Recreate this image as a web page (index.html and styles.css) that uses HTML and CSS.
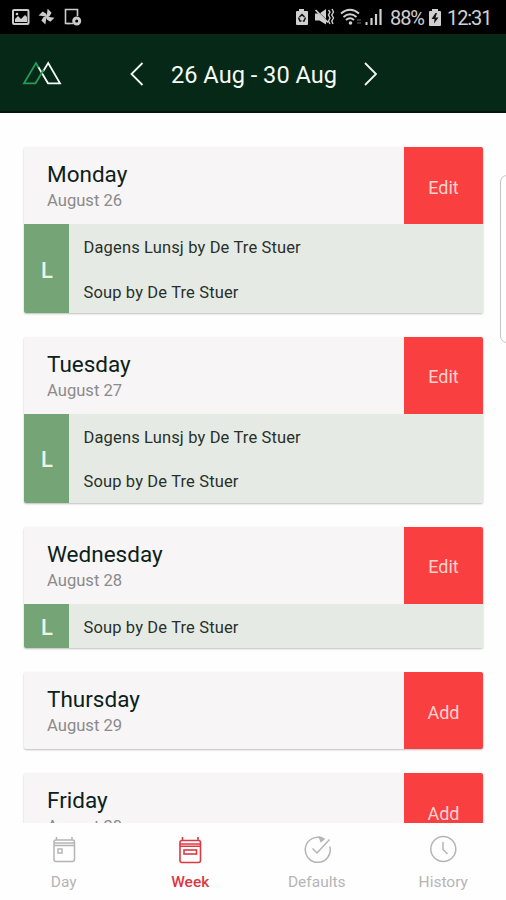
FILE: index.html
```html
<!DOCTYPE html>
<html lang="en">
<head>
<meta charset="utf-8">
<title>Week</title>
<link rel="stylesheet" href="styles.css">
</head>
<body>
<div class="app">
  <div class="status">
    <svg class="status-left" width="72" height="20" viewBox="0 0 72 20">
      <rect x="1" y="2" width="15.5" height="14" rx="1" fill="none" stroke="#ccc" stroke-width="2"/>
      <path d="M3 14V11L6 8L9 11L13 7L15 9V14Z" fill="#ccc"/><circle cx="5" cy="6" r="1.3" fill="#ccc"/>
      <g fill="#ccc" transform="translate(34.500 8.700) rotate(8)"><path d="M0 1V-8L4.500-4.500L3-1Z"/><path d="M-1 0H8L4.500 4.500L1 3Z"/><path d="M0-1V8L-4.500 4.500L-3 1Z"/><path d="M1 0H-8L-4.500-4.500L-1-3Z"/></g>
      <path d="M57.500 15.500H53.500V1.500H65.500V8" fill="none" stroke="#ccc" stroke-width="1.600"/>
      <circle cx="64.700" cy="13" r="3" fill="none" stroke="#ccc" stroke-width="3"/><path d="M55 15.500H61" stroke="#ccc" stroke-width="1.500"/>
    </svg>
    <div class="status-right">
      <svg width="88" height="20" viewBox="0 0 88 20">
        <path fill="#d0d0d0" d="M4 1H9V3H12Q13 3 13 4V16Q13 17 12 17H2Q1 17 1 16V4Q1 3 2 3H4Z"/>
        <path d="M4.500 9L7 6.500L9.500 9M3.500 9.500L5 13H6.500M10.500 9.500L9 13H7.800" fill="none" stroke="#111" stroke-width="1.500"/>
        <path fill="#d0d0d0" d="M20 5.500H24.500L31 1V16.500L24.500 12.500H20Z"/>
        <path d="M20 1L33 14" stroke="#000" stroke-width="1.500"/><path d="M20.500 2L33 14.500" stroke="#d0d0d0" stroke-width="1.700"/>
        <path d="M33.500 2L35 4L33.500 7L35 10L33.500 13L35 16M37 1L38.500 4L36.800 7L38.500 10L36.800 13L38 16" fill="none" stroke="#d0d0d0" stroke-width="1.400"/>
        <path d="M46 5.500Q55-2 64 5.500M48.500 9Q55 3.500 61.500 9M51 12Q55 8.500 59 12" fill="none" stroke="#d0d0d0" stroke-width="2"/><circle cx="55.500" cy="15" r="1.800" fill="#d0d0d0"/><path d="M62 12H66M62 15H66" stroke="#444" stroke-width="1.500"/>
        <path d="M71.500 17V14" stroke="#d0d0d0" stroke-width="2"/><path d="M76.500 17V10M81 17V6M85.500 17V1" stroke="#d0d0d0" stroke-width="2.200"/>
      </svg>
      <span class="pct">88%</span>
      <svg class="batt" width="12" height="18" viewBox="0 0 12 18"><path fill="#d0d0d0" d="M3 0H9V2H11Q12 2 12 3V16Q12 17 11 17H1Q0 17 0 16V3Q0 2 1 2H3Z"/><path fill="#111" d="M6.500 4L2.500 10H5.500L5 14.500L9.500 8.500H6.500L8 4Z"/></svg>
      <span class="clock">12:31</span>
    </div>
  </div>
  <header class="topbar">
    <svg class="logo" width="42" height="28" viewBox="0 0 42 28" fill="none" stroke-width="1.800">
      <path stroke="#f4faf4" d="M16 7.500L26 24.300H38L26.200 4L21 12.500"/>
      <path stroke="#259a5b" d="M16.500 8.500L14 4L2 24.300H13.500L21.500 11"/>
    </svg>
    <div class="range">
      <svg width="16" height="26" viewBox="0 0 16 26"><path d="M13.500 2L2.500 13L13.500 24" fill="none" stroke="#f2f7f2" stroke-width="1.800"/></svg>
      <h1>26 Aug - 30 Aug</h1>
      <svg width="16" height="26" viewBox="0 0 16 26"><path d="M2 2L13 13L2 24" fill="none" stroke="#f2f7f2" stroke-width="1.800"/></svg>
    </div>
  </header>
  <main class="days">
    <section class="card">
      <div class="head"><div class="date"><h2>Monday</h2><p>August 26</p></div><button class="action">Edit</button></div>
      <div class="meal"><div class="tag">L</div><ul><li>Dagens Lunsj by De Tre Stuer</li><li>Soup by De Tre Stuer</li></ul></div>
    </section>
    <section class="card">
      <div class="head"><div class="date"><h2>Tuesday</h2><p>August 27</p></div><button class="action">Edit</button></div>
      <div class="meal"><div class="tag">L</div><ul><li>Dagens Lunsj by De Tre Stuer</li><li>Soup by De Tre Stuer</li></ul></div>
    </section>
    <section class="card">
      <div class="head"><div class="date"><h2>Wednesday</h2><p>August 28</p></div><button class="action">Edit</button></div>
      <div class="meal"><div class="tag">L</div><ul><li>Soup by De Tre Stuer</li></ul></div>
    </section>
    <section class="card">
      <div class="head"><div class="date"><h2>Thursday</h2><p>August 29</p></div><button class="action">Add</button></div>
    </section>
    <section class="card">
      <div class="head"><div class="date"><h2>Friday</h2><p>August 30</p></div><button class="action">Add</button></div>
    </section>
    <div class="edge"></div>
  </main>
  <nav class="tabs">
    <a class="tab"><svg width="28" height="30" viewBox="0 0 28 30"><g fill="none" stroke="currentColor" stroke-width="1.500"><rect x="4" y="5" width="20.500" height="21.500" rx="2"/><path d="M4 8H24.500M4 10.500H24.500M6.500 2V5M22 2V5"/><rect x="8" y="14" width="4" height="4"/></g></svg><span>Day</span></a>
    <a class="tab active"><svg width="28" height="30" viewBox="0 0 28 30"><g fill="none" stroke="currentColor" stroke-width="1.600"><rect x="4" y="5.500" width="20.500" height="22" rx="2"/><path d="M4 9H24.500M4 11.300H24.500M6.500 2V5M22 2V5"/><rect x="8" y="15" width="12.500" height="4"/></g></svg><span>Week</span></a>
    <a class="tab"><svg width="28" height="30" viewBox="0 0 28 30"><g fill="none" stroke="currentColor" stroke-width="1.500"><path d="M20 3.500A12.500 12.500 0 1 0 26.800 11.500"/><path fill="currentColor" d="M16.500 2.300L21 4L18 6.500Z"/><path d="M9.500 13.500L14 18L26.500 4.500"/></g></svg><span>Defaults</span></a>
    <a class="tab"><svg width="28" height="30" viewBox="0 0 28 30"><g fill="none" stroke="currentColor" stroke-width="1.500"><circle cx="14.300" cy="14" r="12.500"/><path d="M14 7V14.500L18.500 19"/></g></svg><span>History</span></a>
  </nav>
</div>
</body>
</html>
```
FILE: styles.css
```css
* { box-sizing: border-box; margin: 0; padding: 0; }
body { width: 506px; height: 900px; overflow: hidden; background: #fefefe; font-family: Roboto, "Liberation Sans", sans-serif; }
.app { display: flex; flex-direction: column; height: 900px; }
.status { height: 34px; flex: none; background: #000; color: #d0d0d0; display: flex; justify-content: space-between; align-items: center; padding: 1px 14px 0 12px; }
.status-right { display: flex; align-items: center; font-size: 20px; line-height: 34px; }
.pct { margin-left: 7px; width: 34px; letter-spacing: -1.1px; white-space: nowrap; }
.batt { margin: 0 6px 0 5px; }
.clock { width: 45px; letter-spacing: -1.1px; white-space: nowrap; }
.topbar { height: 79px; flex: none; background: #062817; border-bottom: 2px solid #04170e; display: flex; align-items: center; padding: 2px 0 0 22px; }
.logo { margin-bottom: 2px; }
.range { display: flex; align-items: center; margin-left: 65px; }
.range h1 { width: 166px; margin: 2px 26px 0 26px; font-size: 23.6px; font-weight: 400; color: #f5faf5; white-space: nowrap; }
.days { flex: 1; min-height: 0; overflow: hidden; position: relative; padding: 34px 23px 0 24px; display: flex; flex-direction: column; gap: 24px; }
.card { flex: none; border-radius: 2px; overflow: hidden; background: #f7f5f6; box-shadow: 0 1px 2px rgba(0,0,0,.25); }
.head { height: 77.25px; display: flex; justify-content: space-between; }
.date { padding: 14px 0 0 23px; }
.date h2 { font-size: 22.5px; line-height: 27px; font-weight: 400; color: #0c2119; }
.date p { font-size: 16.6px; line-height: 20px; margin-top: 3px; color: #8b8b8b; }
.action { width: 79px; height: 77px; border: 0; background: #fa3f41; color: #ffd3d0; font: 400 18px Roboto, sans-serif; padding-top: 3px; }
.meal { display: flex; background: #e5ebe4; }
.tag { width: 45px; background: #75a477; color: #eaf6e6; display: flex; align-items: center; justify-content: center; font-size: 22px; font-weight: 500; padding: 3px 0 0 1px; }
.meal ul { list-style: none; padding-left: 14.5px; }
.meal li { height: 44.25px; line-height: 47px; font-size: 16.5px; letter-spacing: .14px; color: #29302b; white-space: nowrap; }
.edge { position: absolute; right: -12px; top: 62px; width: 18px; height: 168px; border: 1px solid #c4c4c4; border-radius: 7px; background: #fefefe; }
.tabs { height: 77px; flex: none; display: flex; background: #fefefe; }
.tab { flex: 1; display: flex; flex-direction: column; align-items: center; color: #b5b5b5; padding: 12px 0 0 1px; }
.tab span { font-size: 15.5px; line-height: 18px; margin-top: 8px; }
.tab.active { color: #dc3942; }
.tab.active span { font-weight: 500; }
```
